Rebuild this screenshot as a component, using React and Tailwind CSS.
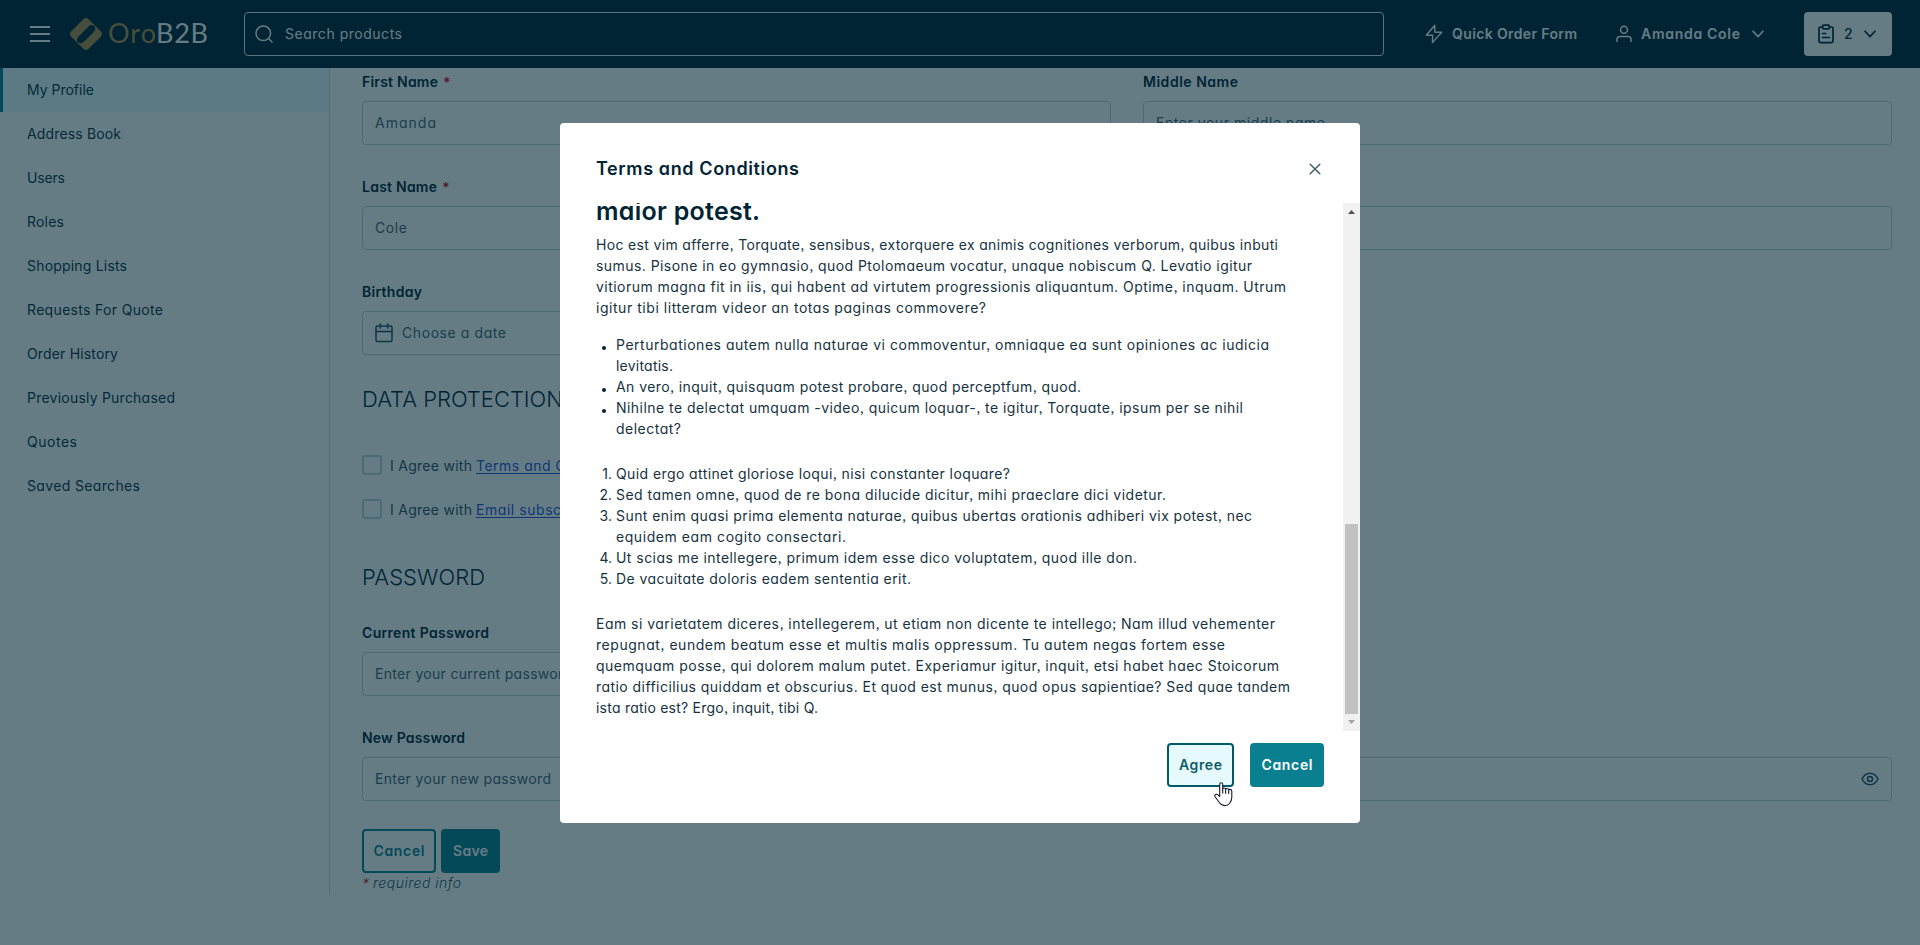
import { useLayoutEffect, useRef } from "react";

/* Inline text tracked so that it spans exactly `w` pixels. */
function Fit({ w, children, className = "-translate-y-px" }) {
  const ref = useRef(null);
  useLayoutEffect(() => {
    const el = ref.current;
    el.style.width = "auto";
    el.style.letterSpacing = "0px";
    const natural = el.getBoundingClientRect().width;
    const gaps = Math.max(1, el.textContent.length - 1);
    el.style.letterSpacing = (w - natural) / gaps + "px";
    el.style.width = w + "px";
  }, [w, children]);
  return (
    <span ref={ref} className={"inline-block whitespace-nowrap " + className}>
      {children}
    </span>
  );
}

const menu = [
  ["My Profile", 67],
  ["Address Book", 94],
  ["Users", 38],
  ["Roles", 37],
  ["Shopping Lists", 100],
  ["Requests For Quote", 136],
  ["Order History", 91],
  ["Previously Purchased", 148],
  ["Quotes", 50],
  ["Saved Searches", 113],
];

const intro = [
  ["Hoc est vim afferre, Torquate, sensibus, extorquere ex animis cognitiones verborum, quibus inbuti", 682],
  ["sumus. Pisone in eo gymnasio, quod Ptolomaeum vocatur, unaque nobiscum Q. Levatio igitur", 656],
  ["vitiorum magna fit in iis, qui habent ad virtutem progressionis aliquantum. Optime, inquam. Utrum", 690],
  ["igitur tibi litteram videor an totas paginas commovere?", 390],
];

const bullets = [
  [
    ["Perturbationes autem nulla naturae vi commoventur, omniaque ea sunt opiniones ac iudicia", 653],
    ["levitatis.", 57],
  ],
  [["An vero, inquit, quisquam potest probare, quod perceptfum, quod.", 465]],
  [
    ["Nihilne te delectat umquam -video, quicum loquar-, te igitur, Torquate, ipsum per se nihil", 627],
    ["delectat?", 65],
  ],
];

const numbered = [
  [["Quid ergo attinet gloriose loqui, nisi constanter loquare?", 394]],
  [["Sed tamen omne, quod de re bona dilucide dicitur, mihi praeclare dici videtur.", 550]],
  [
    ["Sunt enim quasi prima elementa naturae, quibus ubertas orationis adhiberi vix potest, nec", 636],
    ["equidem eam cogito consectari.", 230],
  ],
  [["Ut scias me intellegere, primum idem esse dico voluptatem, quod ille don.", 521]],
  [["De vacuitate doloris eadem sententia erit.", 295]],
];

const outro = [
  ["Eam si varietatem diceres, intellegerem, ut etiam non dicente te intellego; Nam illud vehementer", 679],
  ["repugnat, eundem beatum esse et multis malis oppressum. Tu autem negas fortem esse", 629],
  ["quemquam posse, qui dolorem malum putet. Experiamur igitur, inquit, etsi habet haec Stoicorum", 683],
  ["ratio difficilius quiddam et obscurius. Et quod est munus, quod opus sapientiae? Sed quae tandem", 694],
  ["ista ratio est? Ergo, inquit, tibi Q.", 222],
];

function Lines({ lines }) {
  return lines.map(([text, w]) => (
    <span key={text} className="block h-[21px]">
      <Fit w={w}>{text}</Fit>
    </span>
  ));
}

function Chevron() {
  return (
    <svg width="12" height="8" viewBox="0 0 12 8" fill="none" stroke="currentColor" strokeWidth="1.6" strokeLinecap="round" strokeLinejoin="round">
      <path d="M1 1.2 6 6.6l5-5.4" />
    </svg>
  );
}

function Logo() {
  return (
    <div className="ml-5 flex items-center">
      <svg width="32" height="32" viewBox="0 0 32 32">
        <path
          fill="#b58d4c"
          fillRule="evenodd"
          d="M13.4 1.2Q16-1 18.6 1.2L31 13.6Q33 16 31 18.4L18.6 30.8Q16 33 13.4 30.8L1 18.4Q-1 16 1 13.6ZM18 9 8.8 18.2Q6.2 21 7.200 23.500Q9 26 12 25L15 22.800 23.400 14.400Q26 11.500 24.900 8.800Q22.800 6.200 20 7.300Z"
        />
      </svg>
      <div className="ml-[6px] flex h-8 w-[102px] items-center font-['Lato',sans-serif] text-[27px] font-normal leading-8">
        <Fit w={48} className="-translate-y-px text-[#b58d4c]">Oro</Fit>
        <Fit w={52} className="-translate-y-px text-white">B2B</Fit>
      </div>
    </div>
  );
}

function Header() {
  return (
    <header className="flex h-[68px] items-center bg-[#002434] pl-[30px] pr-7 font-semibold text-white">
      <div className="flex w-5 flex-col gap-[5px]">
        <span className="h-0.5 bg-white" />
        <span className="h-0.5 bg-white" />
        <span className="h-0.5 bg-white" />
      </div>
      <Logo />
      <div className="ml-[34px] flex h-11 w-[1140px] items-center rounded border border-[#e0e8ea] pl-2.5 font-normal">
        <svg width="18" height="18" viewBox="0 0 18 18" fill="none" stroke="currentColor" strokeWidth="1.5" strokeLinecap="round">
          <circle cx="8.300" cy="8.300" r="7.300" />
          <path d="m14 14 3 3" />
        </svg>
        <Fit w={117} className="ml-3 -translate-y-px">Search products</Fit>
      </div>
      <div className="ml-[41px] flex items-center">
        <svg width="18" height="20" viewBox="0 0 18 20" fill="none" stroke="currentColor" strokeWidth="1.4" strokeLinejoin="round">
          <path d="M9.800 1.200 1.300 11.300h6.400L7.400 18.600 16.700 8.200H9.800Z" />
        </svg>
        <Fit w={125} className="ml-[9px] -translate-y-px">Quick Order Form</Fit>
      </div>
      <div className="ml-[39px] flex items-center">
        <svg width="16" height="18" viewBox="0 0 16 18" fill="none" stroke="currentColor" strokeWidth="1.5" strokeLinecap="round">
          <circle cx="8" cy="4.700" r="3.500" />
          <path d="M1 16.500v-2.200q0-2.800 3-2.800h8q3 0 3 2.800v2.200" />
        </svg>
        <Fit w={99} className="ml-[9px] -translate-y-px">Amanda Cole</Fit>
        <span className="ml-3"><Chevron /></span>
      </div>
      <div className="ml-auto flex h-11 w-[88px] items-center rounded bg-white pl-3.5 text-[#002434]">
        <svg width="16" height="20" viewBox="0 0 16 20" fill="none" stroke="currentColor" strokeWidth="1.700" strokeLinejoin="round" strokeLinecap="round">
          <path d="M4.500 3H2.600Q1 3 1 4.600V17q0 1.600 1.600 1.600h10.800Q15 18.600 15 17V4.600Q15 3 13.400 3h-1.900" />
          <rect x="4.600" y="1.100" width="6.800" height="3.800" rx="1.200" />
          <path d="M4.600 9.500h3.200M4.600 13.500h6.800" />
        </svg>
        <span className="ml-2.5 w-5 -translate-y-px font-medium">2</span>
        <Chevron />
      </div>
    </header>
  );
}

function Field({ label, w, required, children, eye }) {
  return (
    <div>
      <div className="flex h-[21px] items-center gap-[5px] font-semibold text-[#002434]">
        <Fit w={w}>{label}</Fit>
        {required && <span className="text-[#c8102e]">*</span>}
      </div>
      <div className="mt-2 flex h-11 items-center rounded border border-[#c0cfd3] px-3 text-[#46626d]">
        {children}
        {eye && (
          <svg className="ml-auto" width="18" height="14" viewBox="0 0 18 14" fill="none" stroke="#264a5a" strokeWidth="1.500">
            <path d="M1 7Q4 1.200 9 1.200T17 7Q14 12.800 9 12.800T1 7Z" />
            <circle cx="9" cy="7" r="2.500" />
          </svg>
        )}
      </div>
    </div>
  );
}

function Consent({ text, w }) {
  return (
    <div className="flex h-5 items-center">
      <span className="mr-2 h-5 w-5 rounded-[3px] border-2 border-[#c0cfd3]" />
      <Fit w={82} className="text-[#33505d]">I Agree with</Fit>
      <Fit w={w} className="ml-1 text-[#2a52d6] underline underline-offset-2">{text}</Fit>
    </div>
  );
}

function Profile() {
  return (
    <main className="flex-1 pl-8 pr-7 pt-1">
      <div className="grid grid-cols-2 gap-x-8 gap-y-8">
        <Field label="First Name" w={76} required><Fit w={61}>Amanda</Fit></Field>
        <Field label="Middle Name" w={95}><Fit w={169}>Enter your middle name</Fit></Field>
        <Field label="Last Name" w={75} required><Fit w={32}>Cole</Fit></Field>
        <Field label="Name Suffix" w={90}><Fit w={165}>Enter your name suffix</Fit></Field>
        <Field label="Birthday" w={60}>
          <svg width="18" height="20" viewBox="0 0 18 20" fill="none" stroke="#264a5a" strokeWidth="1.500" strokeLinecap="round">
            <rect x="1" y="3" width="16" height="15.500" rx="1.500" />
            <path d="M1 8.500h16M5.300 1v4M12.700 1v4" />
          </svg>
          <Fit w={104} className="ml-[9px] -translate-y-px">Choose a date</Fit>
        </Field>
      </div>
      <h2 className="mt-[30px] h-[30px] text-[22px] font-light leading-[30px] text-[#002434]"><Fit w={201}>DATA PROTECTION</Fit></h2>
      <div className="mt-10 flex flex-col gap-6">
        <Consent text="Terms and Conditions" w={155} />
        <Consent text="Email subscription" w={131} />
      </div>
      <h2 className="mt-[43px] h-[30px] text-[22px] font-light leading-[30px] text-[#002434]"><Fit w={123} className="">PASSWORD</Fit></h2>
      <div className="mt-[31px] grid grid-cols-2 gap-8">
        <Field label="Current Password" w={127} eye><Fit w={197}>Enter your current password</Fit></Field>
        <div />
        <Field label="New Password" w={103} eye><Fit w={176}>Enter your new password</Fit></Field>
        <Field label="Confirm Password" w={130} eye><Fit w={190}>Confirm your new password</Fit></Field>
      </div>
      <div className="mt-7 flex gap-[5px] font-semibold">
        <span className="flex h-11 w-[74px] items-center justify-center rounded border-2 border-[#0a7f8f] text-[#0a7f8f]"><Fit w={51}>Cancel</Fit></span>
        <span className="flex h-11 w-[59px] items-center justify-center rounded bg-[#0a7f8f] text-white"><Fit w={35}>Save</Fit></span>
      </div>
      <p className="flex h-[21px] items-center gap-1 font-light italic text-[#33505d]">
        <span className="text-[#c8102e]">*</span>
        <Fit w={88}>required info</Fit>
      </p>
    </main>
  );
}

function Terms() {
  return (
    <section className="flex h-[700px] w-[800px] flex-col rounded bg-white text-[#163240]">
      <div className="flex h-20 items-center justify-between pl-9 pr-[39px] pt-3">
        <h1 className="text-[18px] font-semibold leading-6 text-[#002434]"><Fit w={203} className="">Terms and Conditions</Fit></h1>
        <svg width="12" height="12" viewBox="0 0 12 12" fill="none" stroke="#44606c" strokeWidth="1.500" strokeLinecap="round">
          <path d="m1.200 1.200 9.600 9.600M10.800 1.200 1.200 10.800" />
        </svg>
      </div>
      <div className="flex h-[528px]">
        <div className="flex h-[528px] flex-1 flex-col justify-end overflow-hidden pb-3 pl-9">
          <h2 className="mb-1 text-[25px] font-semibold leading-10 text-[#002434]"><Fit w={164} className="">maior potest.</Fit></h2>
          <p><Lines lines={intro} /></p>
          <ul className="mt-4 list-disc pl-5 marker:text-[11px] marker:text-[#002434]">
            {bullets.map((b) => <li key={b[0][0]}><Lines lines={b} /></li>)}
          </ul>
          <ol className="mt-6">
            {numbered.map((b, i) => (
              <li key={b[0][0]} className="flex">
                <span className="mr-1 h-[21px] w-4 -translate-y-px text-right">{i + 1}.</span>
                <span><Lines lines={b} /></span>
              </li>
            ))}
          </ol>
          <p className="mt-6"><Lines lines={outro} /></p>
        </div>
        <div className="flex w-[17px] flex-col items-center justify-between bg-[#f1f1f1] py-[7px]">
          <svg width="7" height="4" viewBox="0 0 7 4" fill="#505050"><path d="M0 4 3.500 0 7 4Z" /></svg>
          <div className="mb-[6px] mt-auto h-[190px] w-[13px] bg-[#c1c1c1]" />
          <svg width="7" height="4" viewBox="0 0 7 4" fill="#a3a3a3"><path d="M0 0 3.500 4 7 0Z" /></svg>
        </div>
      </div>
      <div className="flex justify-end gap-4 pr-9 pt-3 font-semibold">
        <span className="relative flex h-11 w-[67px] items-center justify-center rounded border-2 border-[#005b66] bg-[#e6fafe] text-[#0f5c68]">
          <Fit w={43}>Agree</Fit>
          <svg className="absolute left-[45px] top-[37px]" width="19" height="25" viewBox="0 0 19 25" fill="#fff" stroke="#1a1a2e" strokeWidth="1.100" strokeLinejoin="round">
            <path d="M5.700 14.500V2.500Q5.700.8 7.200.8T8.700 2.500V7Q8.900 5.900 10.200 6t1.400 1.400Q12 6.300 13.200 6.500t1.500 1.500Q15.100 7.200 16.300 7.400 17.800 7.700 17.800 9.500V15Q17.800 19 15.500 21.500 13.800 23.600 10.800 23.600 7.500 23.600 5.300 20.500L1.200 15Q.2 13.200 1.500 12.500T4 12.800Z" />
            <path d="M8.700 6.500v5M11.600 7v4.700M14.700 7.700v4.300" fill="none" />
          </svg>
        </span>
        <span className="flex h-11 w-[74px] items-center justify-center rounded bg-[#0a7f8f] text-white"><Fit w={51}>Cancel</Fit></span>
      </div>
    </section>
  );
}

export default function App() {
  return (
    <div className="relative h-[945px] w-full overflow-hidden bg-white font-['Inter',sans-serif] text-[14px] leading-[21px] [font-feature-settings:'cv11','ss03']">
      <Header />
      <div className="flex">
        <nav className="h-[826px] w-[330px] border-r border-[#c9d8dc] text-[#0b3042]">
          {menu.map(([text, w], i) => (
            <div
              key={text}
              className={
                "flex h-11 items-center " +
                (i === 0 ? "border-l-[3px] border-[#0a7f8f] bg-[#e6fafc] pl-6" : "pl-[27px]")
              }
            >
              <Fit w={w}>{text}</Fit>
            </div>
          ))}
        </nav>
        <Profile />
      </div>
      <div className="absolute inset-0 flex items-center justify-center bg-[#002434]/60 pt-px">
        <Terms />
      </div>
    </div>
  );
}
